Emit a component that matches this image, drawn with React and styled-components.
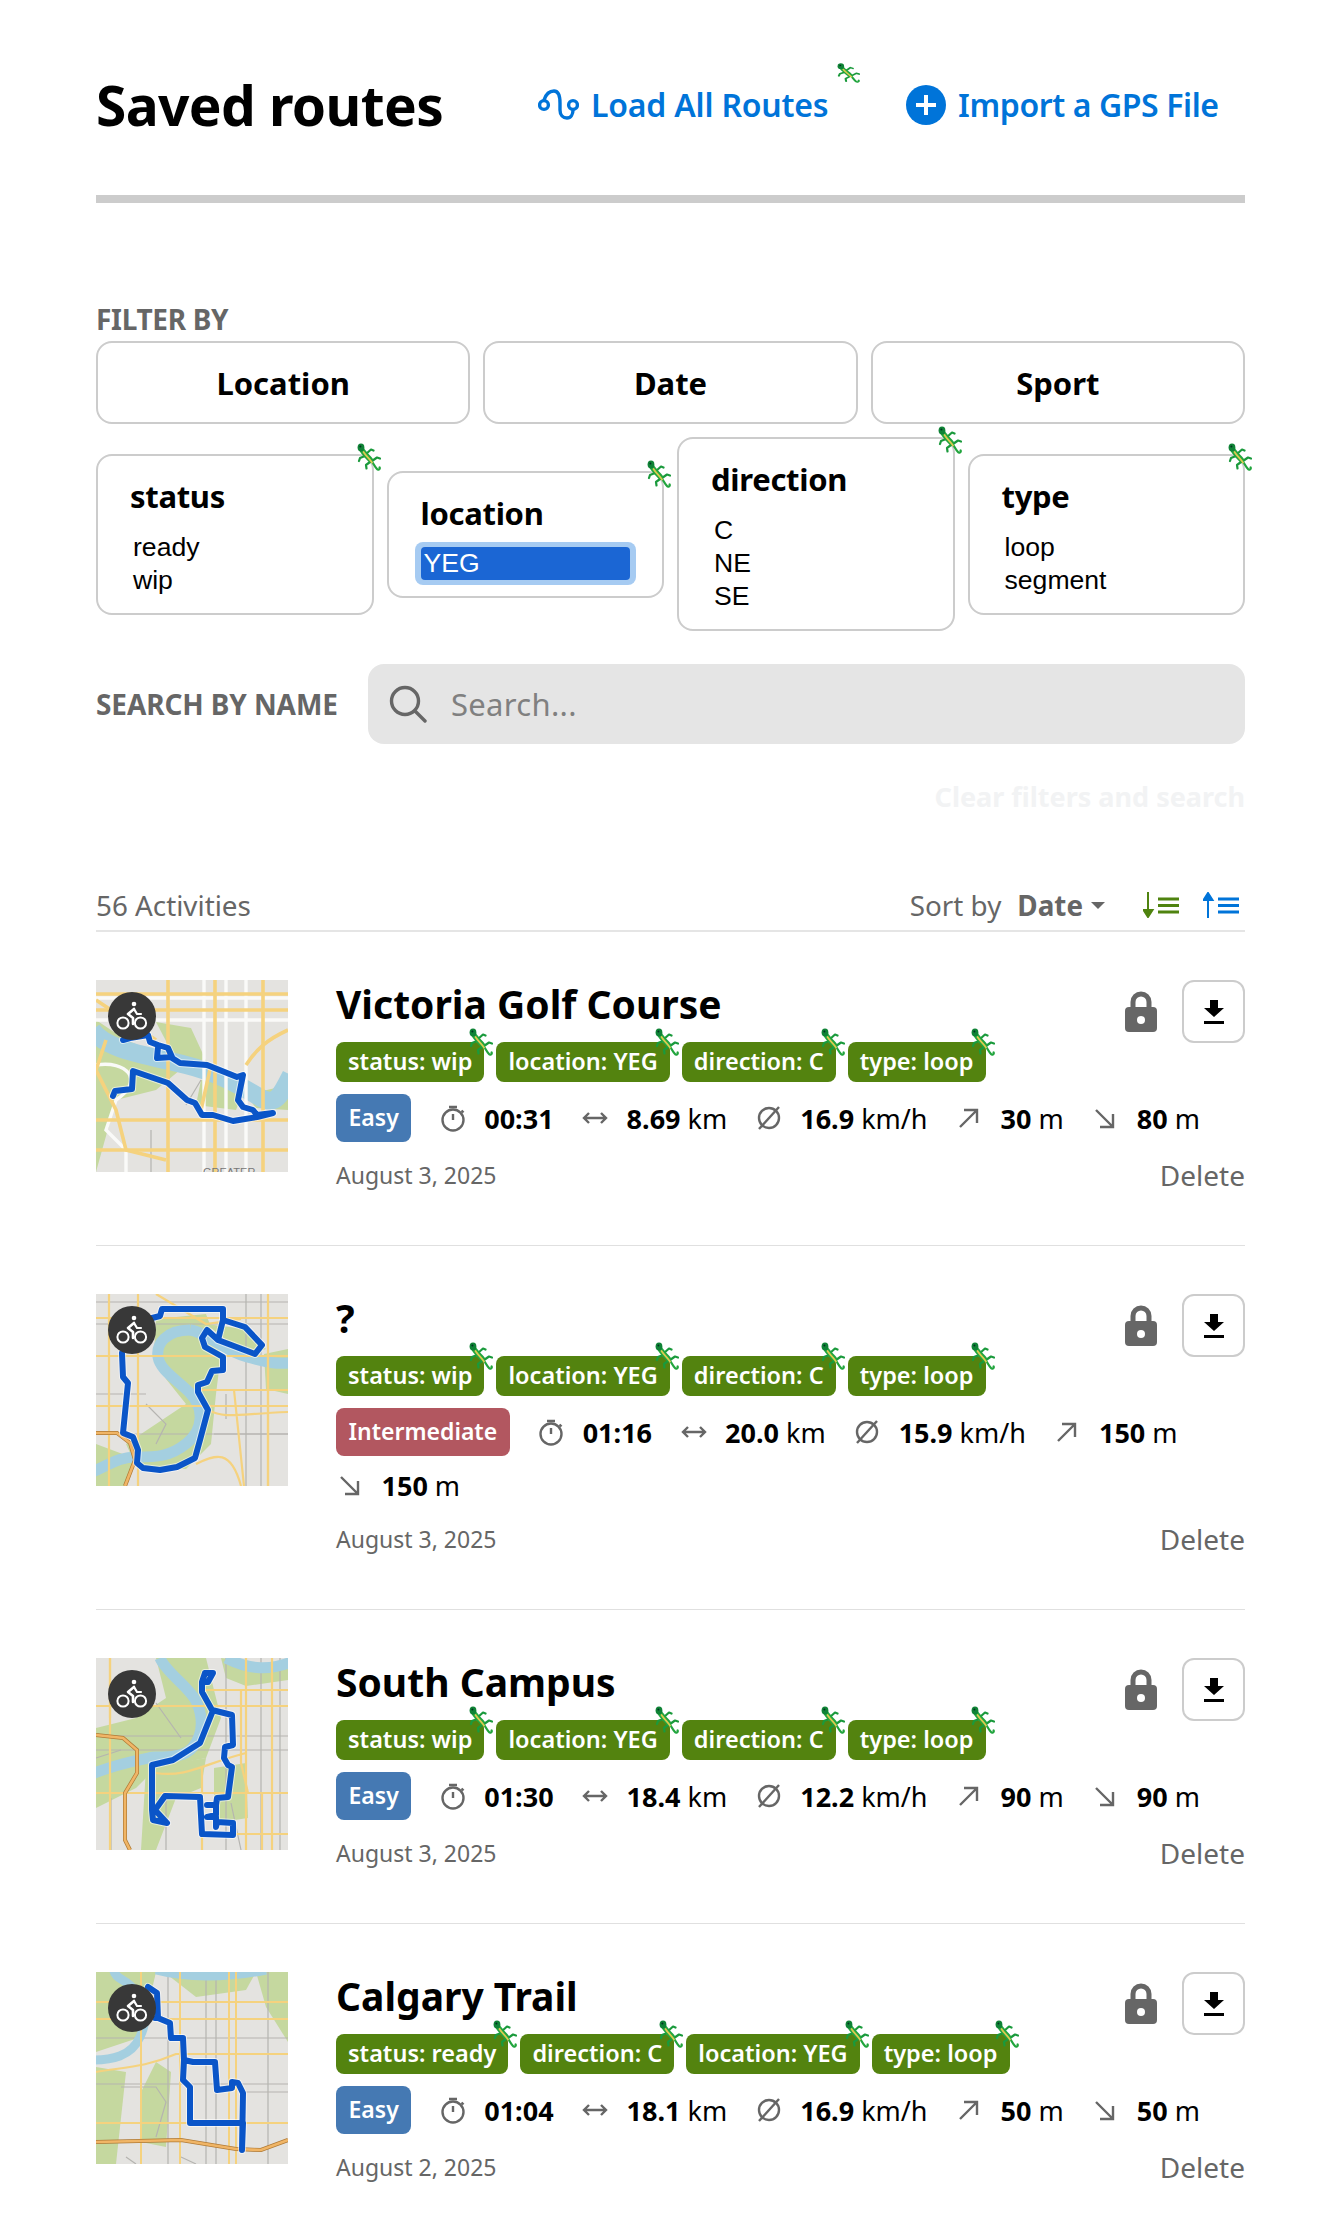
import React from "react";
import styled, { createGlobalStyle } from "styled-components";

const sans = `"Noto Sans", "Open Sans", sans-serif`;

const GlobalStyle = createGlobalStyle`
  html, body {
    margin: 0;
    padding: 0;
    background: #fff;
    font-family: ${sans};
    color: #000;
  }
  * { box-sizing: border-box; }
`;

const grid = (xs, ys) =>
  xs.map((x) => `M${x} 0V192`).join("") + ys.map((y) => `M0 ${y}H192`).join("");

const maps = {
  victoria: {
    parks: [
      "M0 40L30 60L90 85L60 110L20 120L0 192Z",
      "M60 42L95 48L112 85L80 80Z",
      "M105 100L150 105L140 130L100 125Z",
      "M150 115L192 105L192 130L160 128Z",
    ],
    river: ["M-4 50C10 70 50 75 90 85S150 110 165 118S185 115 195 95"],
    riverWidth: 18,
    whiteWidth: 3.4,
    yellowWidth: 3.6,
    white: [grid([108, 130, 150], [18, 40]), "M0 85C30 80 50 100 20 120L10 150L30 170L30 192"],
    yellow: [
      grid([72, 119, 167], [14, 30, 140, 170]),
      "M0 20L30 40L60 60M192 50C170 60 160 70 150 85M115 85L105 130M10 60L0 90L20 130L30 170L70 180",
    ],
    grey: ["M55 150V192M105 100L90 125"],
    route:
      "M27 60L34 58L52 55L54 62L62 65L72 68L76 77L61 78L62 67M76 78L84 83L111 85L141 97L147 95L142 120L147 127L157 130L161 135L177 133L161 137L137 141L117 135L106 135L99 123L91 120L72 103L37 91L36 109L19 111L17 116",
    label: "GREATER",
  },
  unknown: {
    parks: [
      "M60 25L110 20L125 60L120 100L115 150L90 175L40 172L30 150L60 130L90 110L70 85L58 60Z",
      "M110 30L150 35L170 55L150 62Z",
      "M0 150L40 165L30 192L0 192Z",
      "M168 60L192 55L192 100L170 95Z",
    ],
    river: ["M94 36C70 36 60 50 62 63S80 85 94 99S108 135 91 149S60 163 41 163S15 170 -4 178", "M94 36C110 38 130 58 151 63S175 70 195 69"],
    riverWidth: 11,
    whiteWidth: 3,
    yellowWidth: 2.2,
    white: [],
    yellow: [
      grid([13, 42, 172], [24, 62, 112]),
      "M100 96H192M112 116C130 125 140 120 192 118M138 96L148 192M172 62V192M60 0L110 30L145 25M100 170C120 160 135 155 145 192",
    ],
    grey: [grid([150, 165], [8, 30, 140]), "M50 110L70 130L60 150M0 100H50M130 100V125M118 140H192"],
    highway: "M0 139L21 139L34 149L39 166L29 192",
    route:
      "M26 59L27 83L32 89L29 119L27 139L37 143L42 156L41 169L47 174L64 176L81 173L99 164L104 146L112 116L102 98L102 91L111 88L116 77L127 76L127 63L109 53L106 44L111 36L122 46L159 60L166 51L149 33L127 26L122 46M127 26L127 15L66 15L64 22L56 24",
  },
  south: {
    parks: [
      "M60 0L110 0L125 60L110 100L60 110L40 130L0 150L0 70L40 60L70 40Z",
      "M50 110L110 100L105 130L80 140L60 192L45 192Z",
      "M125 0L192 8L192 22L150 28L130 20Z",
      "M118 110L150 105L152 160L118 165Z",
    ],
    river: ["M64 0C70 15 95 30 101 45S108 75 97 89S60 98 57 99S25 104 -4 116", "M130 0C150 10 170 14 195 4"],
    riverWidth: 11,
    whiteWidth: 3,
    yellowWidth: 2.2,
    white: [],
    yellow: [
      grid([14, 150, 176], [48, 135]),
      "M105 32H192M145 32V105L152 135M0 48H15M14 0V60M60 115C90 120 110 105 150 95M106 110V192M166 135V192M120 176H192",
    ],
    grey: [grid([130, 165, 184], [78, 92]), "M60 45L85 80M0 100L25 92M70 138V192M15 140V192M135 145L145 192"],
    highway: "M0 77L27 80L41 92L41 115L29 135L29 182L34 192",
    route:
      "M109 15L117 15L112 24L106 24L109 15M106 24L106 34L116 52L136 57L137 87L129 89L128 100L132 107L136 109L132 139L121 140L120 147L111 147L120 147L120 157L111 159L120 159L120 169L121 164L137 165L137 177L106 176L104 139L69 138L59 152L71 165L57 162L56 152L56 107L77 102L104 85L116 55",
  },
  calgary: {
    parks: [
      "M0 0L60 0L45 65L0 80Z",
      "M160 0L192 0L192 70L170 35Z",
      "M0 95L30 100L20 192L0 192Z",
      "M68 0L160 0L150 18L100 25Z",
      "M45 120L60 90L75 100L70 175L45 170Z",
    ],
    river: ["M-4 88C15 88 35 85 44 65S50 35 40 20S20 10 17 -4", "M60 -2C90 6 130 6 170 -2"],
    riverWidth: 9,
    whiteWidth: 3,
    yellowWidth: 2,
    white: [],
    yellow: [
      grid([45, 84, 133, 140], [30, 47, 151]),
      "M0 100C30 95 50 95 80 82H192M45 100V192",
    ],
    grey: [grid([72, 110, 120, 172], [66, 112]), "M25 115H60L70 130L60 165M150 120L165 120H192M85 185L100 192M30 185L40 192"],
    highway: "M0 170L85 168L140 177L165 178L192 168",
    route:
      "M52 15L61 21L62 46L59 46L62 46L74 51L75 66L87 66L88 88L97 90L119 90L121 118L136 116L136 110L142 111L147 121L146 178L147 151L94 151L94 115L87 108L88 88",
  },
};

function RouteMap({ name }) {
  const m = maps[name];
  return (
    <MapSvg viewBox="0 0 192 192">
      <rect width="192" height="192" fill="#e4e3e0" />
      <MapBase>
        {m.parks.map((d) => (
          <path key={d} d={d} fill="#c5d89f" />
        ))}
        {m.grey.map((d) => (
          <path key={d} d={d} fill="none" stroke="#b5b4b0" strokeWidth="1.2" />
        ))}
        {m.river.map((d) => (
          <path key={d} d={d} fill="none" stroke="#a4cfe0" strokeWidth={m.riverWidth} />
        ))}
        {m.white.map((d) => (
          <path key={d} d={d} fill="none" stroke="#fafaf8" strokeWidth={m.whiteWidth} />
        ))}
        {m.yellow.map((d) => (
          <path key={d} d={d} fill="none" stroke="#f5d27e" strokeWidth={m.yellowWidth} />
        ))}
        {m.highway && (
          <>
            <path d={m.highway} fill="none" stroke="#b07a35" strokeWidth="4" />
            <path d={m.highway} fill="none" stroke="#f0b566" strokeWidth="2.6" />
          </>
        )}
      </MapBase>
      {m.label && (
        <text x="107" y="196" fontSize="11" fill="#777" fontFamily="Liberation Sans, sans-serif">
          {m.label}
        </text>
      )}
      <path d={m.route} fill="none" stroke="#fff" strokeWidth="8" strokeLinejoin="round" strokeLinecap="round" opacity="0.6" />
      <path d={m.route} fill="none" stroke="#0a55c8" strokeWidth="6" strokeLinejoin="round" strokeLinecap="round" />
    </MapSvg>
  );
}

function Lizard({ $wide }) {
  return (
    <LizardSvg $wide={$wide} viewBox="0 0 24 28" preserveAspectRatio="none">
      <g fill="none" strokeLinecap="round" strokeLinejoin="round">
        <path d="M9 11L14 6.5L16.5 7.5M8 13L3 15L2 18M15 18L20 14.5L23 15.5M13 19L9 22L9.5 25.5" stroke="#1a9a3c" strokeWidth="2.2" />
        <path d="M4 5C6 10 10 13 13 16C16 19 17 23 20 26C21 27.2 23.4 26.4 22.6 24.4" stroke="#22a53e" strokeWidth="2.2" />
        <path d="M4.5 6C6.5 10 10 13 13.5 17" stroke="#22a53e" strokeWidth="5.2" />
        <path d="M6.5 9C9 13 12 15 15 19.5" stroke="#dccb4f" strokeWidth="1.8" />
      </g>
      <ellipse cx="4" cy="4.4" rx="3.4" ry="4" fill="#0f8336" />
      <circle cx="3.4" cy="3.4" r="1" fill="#032" />
    </LizardSvg>
  );
}

const BikeIcon = () => (
  <svg width="48" height="48" viewBox="0 0 48 48" fill="none" stroke="#fff" strokeLinecap="round" strokeLinejoin="round">
    <circle cx="15" cy="31" r="5.6" strokeWidth="2" />
    <circle cx="32.5" cy="31" r="5.6" strokeWidth="2" />
    <circle cx="26" cy="12" r="2.3" fill="#fff" stroke="none" />
    <path d="M26 17L20 22L25 26V32" strokeWidth="2.6" />
    <path d="M26 17L29 22H33" strokeWidth="2.2" />
  </svg>
);

const RouteIcon = () => (
  <svg width="41" height="31" viewBox="0 0 41 31" fill="none" stroke="#0074d9" strokeWidth="3.4" strokeLinecap="round">
    <path d="M6 11C8 5 12 2 16 2C21 2 22 7 22 14V21C22 26 25 29 29 29C33 29 35 25 35 21" />
    <circle cx="6" cy="16" r="4.4" />
    <circle cx="35" cy="16" r="4.4" />
  </svg>
);

const PlusIcon = () => (
  <svg width="40" height="40" viewBox="0 0 40 40">
    <circle cx="20" cy="20" r="20" fill="#0074d9" />
    <path d="M20 10V30M10 20H30" stroke="#fff" strokeWidth="4" />
  </svg>
);

const SearchIcon = () => (
  <svg width="38" height="38" viewBox="0 0 38 38" fill="none" stroke="#666" strokeWidth="3.4">
    <circle cx="16" cy="16" r="13.5" />
    <path d="M26 26L36 36" strokeLinecap="round" />
  </svg>
);

const SortIcon = ({ color, up }) => (
  <svg width="36" height="26" viewBox="0 0 36 26">
    <path
      d={up ? "M5 26V6M0.5 8L5 1L9.5 8Z" : "M5 0V20M0.5 18L5 25L9.5 18Z"}
      stroke={color}
      strokeWidth="2"
      fill={color}
    />
    <path d="M15 7H36M15 13.5H36M15 20H36" stroke={color} strokeWidth="3" />
  </svg>
);

const LockIcon = () => (
  <svg width="32" height="42" viewBox="0 0 32 42">
    <path d="M8 20V12a8 8 0 0 1 16 0V20" fill="none" stroke="#666" strokeWidth="5" />
    <rect y="17" width="32" height="25" rx="4" fill="#666" />
    <circle cx="16" cy="30" r="4" fill="#fff" />
  </svg>
);

const DownloadIcon = () => (
  <svg width="20" height="24" viewBox="0 0 20 24" fill="#000">
    <path d="M6 0H14V8H20L10 17L0 8H6Z" />
    <rect y="21" width="20" height="3" />
  </svg>
);

const statIcons = {
  time: (
    <>
      <circle cx="14" cy="16" r="10.5" />
      <path d="M10 3H18M14 16V10M22.5 6.5L24.5 8.5" />
    </>
  ),
  distance: <path d="M3 14H25M8 9L3 14L8 19M20 9L25 14L20 19" />,
  speed: (
    <>
      <circle cx="14" cy="14" r="10" />
      <path d="M4 25L24 3" />
    </>
  ),
  up: <path d="M5 23L22 6M9 6H22V19" />,
  down: <path d="M5 6L22 23M9 23H22V10" />,
};

function Stat({ icon, value, unit }) {
  return (
    <StatBox>
      <svg width="28" height="28" viewBox="0 0 28 28" fill="none" stroke="#666" strokeWidth="2.4">
        {statIcons[icon]}
      </svg>
      <StatValue>
        <b>{value}</b>
        {unit && ` ${unit}`}
      </StatValue>
    </StatBox>
  );
}

const filters = [
  { title: "status", options: ["ready", "wip"] },
  { title: "location", options: ["YEG"], selected: "YEG" },
  { title: "direction", options: ["C", "NE", "SE"] },
  { title: "type", options: ["loop", "segment"] },
];

const standardTags = ["status: wip", "location: YEG", "direction: C", "type: loop"];

const activities = [
  {
    map: "victoria",
    title: "Victoria Golf Course",
    tags: standardTags,
    level: "Easy",
    stats: ["00:31", "8.69", "16.9", "30", "80"],
    date: "August 3, 2025",
  },
  {
    map: "unknown",
    title: "?",
    tags: standardTags,
    level: "Intermediate",
    stats: ["01:16", "20.0", "15.9", "150", "150"],
    date: "August 3, 2025",
  },
  {
    map: "south",
    title: "South Campus",
    tags: standardTags,
    level: "Easy",
    stats: ["01:30", "18.4", "12.2", "90", "90"],
    date: "August 3, 2025",
  },
  {
    map: "calgary",
    title: "Calgary Trail",
    tags: ["status: ready", "direction: C", "location: YEG", "type: loop"],
    level: "Easy",
    stats: ["01:04", "18.1", "16.9", "50", "50"],
    date: "August 2, 2025",
  },
];

export default function App() {
  return (
    <Page>
      <GlobalStyle />
      <Header>
        <Title>Saved routes</Title>
        <LoadLink>
          <RouteIcon />
          Load All Routes
          <HeaderLizard>
            <Lizard $wide />
          </HeaderLizard>
        </LoadLink>
        <ImportLink>
          <PlusIcon />
          Import a GPS File
        </ImportLink>
      </Header>

      <FilterLabel>FILTER BY</FilterLabel>
      <FilterButtons>
        <FilterButton>Location</FilterButton>
        <FilterButton>Date</FilterButton>
        <FilterButton>Sport</FilterButton>
      </FilterButtons>

      <FilterCards>
        {filters.map((f) => (
          <FilterCard key={f.title}>
            <CardLizard>
              <Lizard />
            </CardLizard>
            <CardTitle>{f.title}</CardTitle>
            <OptionList $focused={!!f.selected}>
              {f.options.map((o) => (
                <Option key={o} $selected={o === f.selected}>
                  {o}
                </Option>
              ))}
            </OptionList>
          </FilterCard>
        ))}
      </FilterCards>

      <SearchRow>
        <SearchLabel>SEARCH BY NAME</SearchLabel>
        <SearchBox>
          <SearchIcon />
          <Placeholder>Search...</Placeholder>
        </SearchBox>
      </SearchRow>
      <ClearLink>Clear filters and search</ClearLink>

      <ListHeader>
        <Count>56 Activities</Count>
        <SortControls>
          <SortLabel>Sort by</SortLabel>
          <SortValue>Date</SortValue>
          <Caret />
          <SortIcons>
            <SortIcon color="#4f830f" />
            <SortIcon color="#0074d9" up />
          </SortIcons>
        </SortControls>
      </ListHeader>

      {activities.map((a) => (
        <Activity key={a.map}>
          <Thumb>
            <RouteMap name={a.map} />
            <SportBadge>
              <BikeIcon />
            </SportBadge>
          </Thumb>
          <Details>
            <TitleRow>
              <ActivityTitle>{a.title}</ActivityTitle>
              <Actions>
                <LockIcon />
                <DownloadButton>
                  <DownloadIcon />
                </DownloadButton>
              </Actions>
            </TitleRow>
            <Tags>
              {a.tags.map((t) => (
                <Tag key={t}>
                  {t}
                  <TagLizard>
                    <Lizard />
                  </TagLizard>
                </Tag>
              ))}
            </Tags>
            <Stats>
              <Level $hard={a.level !== "Easy"}>{a.level}</Level>
              <Stat icon="time" value={a.stats[0]} />
              <Stat icon="distance" value={a.stats[1]} unit="km" />
              <Stat icon="speed" value={a.stats[2]} unit="km/h" />
              <Stat icon="up" value={a.stats[3]} unit="m" />
              <Stat icon="down" value={a.stats[4]} unit="m" />
            </Stats>
            <DateRow>
              <span>{a.date}</span>
              <DeleteLink>Delete</DeleteLink>
            </DateRow>
          </Details>
        </Activity>
      ))}
    </Page>
  );
}

const Page = styled.div`
  width: 1341px;
  height: 2236px;
  overflow: hidden;
  padding: 0 96px;
`;

const Header = styled.header`
  display: flex;
  align-items: center;
  height: 203px;
  padding-top: 14px;
  border-bottom: 8px solid #ccc;
`;

const Title = styled.h1`
  flex: 0 0 442px;
  margin: 0;
  font-size: 55px;
  line-height: 64px;
  font-weight: 700;
  letter-spacing: -0.6px;
`;

const HeaderLink = styled.a`
  display: flex;
  align-items: center;
  color: #0074d9;
  font-size: 32px;
  font-weight: 600;
  letter-spacing: -0.2px;
  white-space: nowrap;
`;

const LoadLink = styled(HeaderLink)`
  position: relative;
  flex: 0 0 368px;
  gap: 12px;
`;

const HeaderLizard = styled.span`
  position: absolute;
  left: 299px;
  top: -20px;
  display: flex;
`;

const ImportLink = styled(HeaderLink)`
  gap: 12px;
  letter-spacing: -0.4px;
`;

const FilterLabel = styled.div`
  margin-top: 100px;
  font-size: 28px;
  line-height: 32px;
  font-weight: 700;
  color: #666;
  letter-spacing: -0.3px;
`;

const FilterButtons = styled.div`
  display: grid;
  grid-template-columns: repeat(3, 1fr);
  gap: 13px;
  margin-top: 6px;
`;

const FilterButton = styled.button`
  height: 83px;
  background: #fff;
  border: 2.5px solid #ccc;
  border-radius: 16px;
  font-family: ${sans};
  font-size: 31px;
  font-weight: 700;
  color: #000;
`;

const FilterCards = styled.div`
  display: grid;
  grid-template-columns: repeat(4, 1fr);
  column-gap: 13px;
  align-items: center;
  margin-top: 13px;
`;

const FilterCard = styled.div`
  position: relative;
  padding: 20px 32px 16px 32px;
  background: #fff;
  border: 2.5px solid #ccc;
  border-radius: 16px;
`;

const CardTitle = styled.div`
  font-size: 31px;
  line-height: 40px;
  font-weight: 700;
  letter-spacing: -0.3px;
`;

const OptionList = styled.div`
  margin-top: 15px;
  border-radius: 8px;
  font-family: "Liberation Sans", Arial, sans-serif;
  font-size: 26.6px;
  line-height: 33px;
  ${(p) =>
    p.$focused &&
    `
    margin: 9px -6px -5px;
    padding: 5px 6px;
    background: #a6cbf2;
  `}
`;

const Option = styled.div`
  padding: 0 3px;
  ${(p) =>
    p.$selected &&
    `
    background: #1b66d4;
    color: #fff;
    border-radius: 4px;
  `}
`;

const LizardSvg = styled.svg`
  display: block;
  width: ${(p) => (p.$wide ? "23px" : "24px")};
  height: ${(p) => (p.$wide ? "20px" : "28px")};
`;

const CardLizard = styled.span`
  position: absolute;
  top: -13px;
  right: -9px;
`;

const SearchRow = styled.div`
  display: flex;
  align-items: center;
  gap: 29px;
  margin-top: 33px;
`;

const SearchLabel = styled.div`
  flex: 0 0 243px;
  font-size: 28px;
  font-weight: 700;
  color: #666;
  letter-spacing: -0.1px;
  white-space: nowrap;
`;

const SearchBox = styled.div`
  flex: 1;
  display: flex;
  align-items: center;
  gap: 24px;
  height: 80px;
  padding-left: 21px;
  background: #e5e5e5;
  border-radius: 16px;
`;

const Placeholder = styled.span`
  font-size: 31px;
  color: #808080;
  letter-spacing: 0.3px;
`;

const ClearLink = styled.div`
  margin-top: 35px;
  text-align: right;
  font-size: 27px;
  line-height: 36px;
  font-weight: 700;
  color: #f2f3f4;
`;

const ListHeader = styled.div`
  display: flex;
  justify-content: space-between;
  align-items: center;
  margin-top: 72px;
  padding-bottom: 7px;
  border-bottom: 2px solid #e5e5e5;
  color: #666;
  font-size: 27.8px;
  line-height: 36px;
`;

const Count = styled.span``;

const SortControls = styled.div`
  display: flex;
  align-items: center;
`;

const SortLabel = styled.span`
  margin-right: 16px;
`;

const SortValue = styled.b`
  margin-right: 8px;
`;

const Caret = styled.span`
  width: 0;
  height: 0;
  border-left: 7px solid transparent;
  border-right: 7px solid transparent;
  border-top: 7px solid #666;
`;

const SortIcons = styled.div`
  display: flex;
  gap: 24px;
  margin-left: 38px;
  margin-right: 6px;
`;

const Activity = styled.article`
  display: flex;
  gap: 48px;
  padding: 48px 0 54px;
  border-bottom: 1px solid #e0e0e0;
`;

const Thumb = styled.div`
  position: relative;
  flex: 0 0 192px;
  height: 192px;
`;

const MapSvg = styled.svg`
  display: block;
  width: 192px;
  height: 192px;
`;

const MapBase = styled.g`
  filter: blur(0.4px);
`;

const SportBadge = styled.div`
  position: absolute;
  top: 12px;
  left: 12px;
  width: 48px;
  height: 48px;
  border-radius: 50%;
  background: #383838;
`;

const Details = styled.div`
  flex: 1;
  min-width: 0;
`;

const TitleRow = styled.div`
  display: flex;
  justify-content: space-between;
  height: 62px;
`;

const ActivityTitle = styled.h2`
  margin: 0;
  font-size: 39px;
  line-height: 48px;
  font-weight: 700;
`;

const Actions = styled.div`
  display: flex;
  align-items: flex-start;
  gap: 25px;

  > svg {
    margin-top: 10px;
  }
`;

const DownloadButton = styled.button`
  display: flex;
  align-items: center;
  justify-content: center;
  width: 63px;
  height: 63px;
  padding: 0;
  background: #fff;
  border: 2.5px solid #ccc;
  border-radius: 12px;
`;

const Tags = styled.div`
  display: flex;
  gap: 12px;
`;

const Tag = styled.span`
  position: relative;
  height: 40px;
  padding: 0 12px;
  border-radius: 8px;
  background: #53830f;
  color: #fff;
  font-size: 23.5px;
  line-height: 38px;
  font-weight: 600;
  white-space: nowrap;
`;

const TagLizard = styled.span`
  position: absolute;
  top: -14px;
  right: -9px;
`;

const Stats = styled.div`
  display: flex;
  flex-wrap: wrap;
  align-items: center;
  column-gap: 27.5px;
  row-gap: 8px;
  margin-top: 12px;
`;

const Level = styled.span`
  height: 48px;
  padding: 0 12.5px;
  border-radius: 8px;
  background: ${(p) => (p.$hard ? "#b25760" : "#4579b3")};
  color: #fff;
  font-size: 23px;
  line-height: 47px;
  font-weight: 600;
`;

const StatBox = styled.div`
  display: flex;
  align-items: center;
  gap: 17.5px;
  height: 42px;
`;

const StatValue = styled.span`
  font-size: 27px;
  white-space: pre;

  b {
    font-weight: 700;
  }
`;

const DateRow = styled.div`
  display: flex;
  justify-content: space-between;
  align-items: center;
  margin-top: 17px;
  height: 32px;
  color: #666;
  font-size: 23px;
`;

const DeleteLink = styled.span`
  font-size: 28px;
`;
